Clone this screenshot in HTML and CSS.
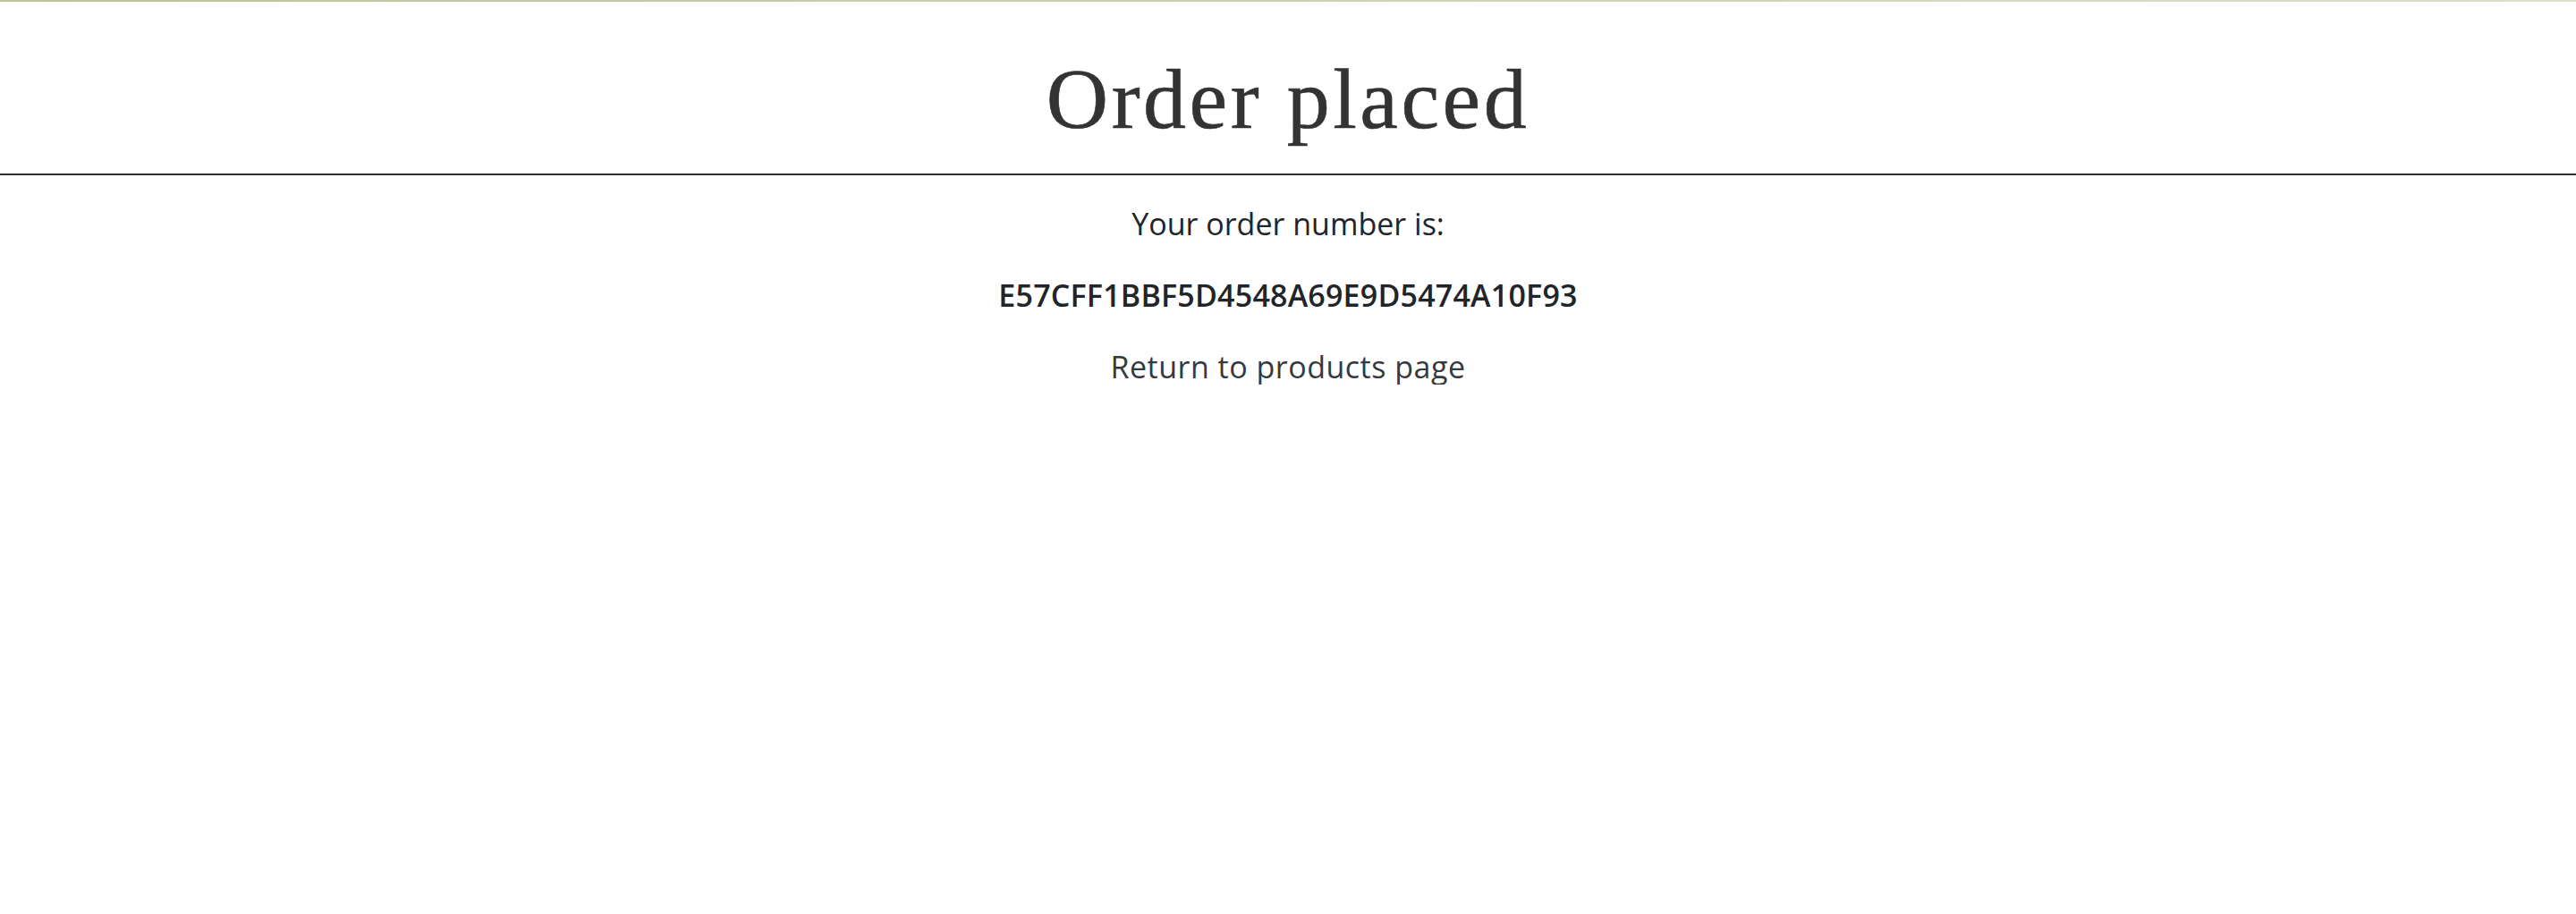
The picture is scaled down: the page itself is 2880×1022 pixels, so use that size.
FILE: index.html
```html
<!DOCTYPE html>
<html lang="en">
<head>
<meta charset="utf-8">
<title>Order placed</title>
<link rel="stylesheet" href="styles.css">
</head>
<body>
<div class="topbar"></div>
<header class="page-header">
  <h1 class="title">Order placed</h1>
</header>
<main class="content">
  <p class="line">Your order number is:</p>
  <p class="line order-number">E57CFF1BBF5D4548A69E9D5474A10F93</p>
  <a class="line back-link" href="#">Return to products page</a>
</main>
</body>
</html>
```
FILE: styles.css
```css
html, body {
  margin: 0;
  padding: 0;
  background: #ffffff;
}
.topbar {
  height: 2px;
  background: linear-gradient(to right, #bac696, #dcdfc6);
}
.page-header {
  height: 192px;
  display: flex;
  align-items: center;
  justify-content: center;
  border-bottom: 2px solid #2d3236;
}
.title {
  margin: 0;
  font-family: "Liberation Serif", "DejaVu Serif", serif;
  font-weight: normal;
  font-size: 96px;
  letter-spacing: 3.5px;
  line-height: 1;
  color: #333333;
  padding-top: 25px;
  -webkit-text-stroke: 0.6px #333333;
}
.content {
  display: flex;
  flex-direction: column;
  align-items: center;
  gap: 40px;
  padding-top: 34px;
  font-family: "Open Sans", "DejaVu Sans", sans-serif;
  font-size: 34px;
  color: #212529;
}
.line {
  margin: 0;
  line-height: 40px;
}
.order-number {
  font-weight: 600;
  letter-spacing: 0.2px;
}
.back-link {
  color: #343a40;
  text-decoration: none;
  letter-spacing: 0.5px;
}
```
